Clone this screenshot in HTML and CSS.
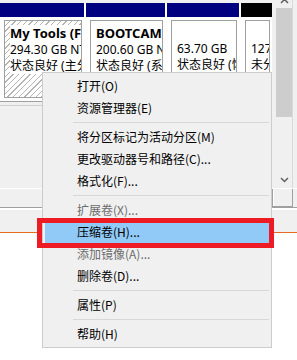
FILE: index.html
```html
<!DOCTYPE html>
<html lang="zh-CN">
<head>
<meta charset="utf-8">
<title>磁盘管理</title>
<link rel="stylesheet" href="styles.css">
</head>
<body>
<div class="screen">
  <div class="upper">
    <div class="disk">
      <div class="parts">
        <div class="part">
          <div class="part-head"></div>
          <div class="part-body">
            <div class="box sel">
              <div class="label"><b>My Tools (F:)</b><br>294.30 GB NTFS<br>状态良好 (主分区)</div>
            </div>
          </div>
        </div>
        <div class="part">
          <div class="part-head"></div>
          <div class="part-body">
            <div class="box">
              <div class="label"><b>BOOTCAMP (C:)</b><br>200.60 GB NTFS<br>状态良好 (系统)</div>
            </div>
          </div>
        </div>
        <div class="part">
          <div class="part-head"></div>
          <div class="part-body">
            <div class="box">
              <div class="label">&nbsp;<br>63.70 GB<br>状态良好 (恢复分区)</div>
            </div>
          </div>
        </div>
        <div class="part">
          <div class="part-head black"></div>
          <div class="part-body">
            <div class="box">
              <div class="label">&nbsp;<br>127 MB<br>未分配</div>
            </div>
          </div>
        </div>
      </div>
      <div class="rest"><div class="rest-line"></div></div>
    </div>
    <div class="vscroll">
      <svg class="arrow-up" width="9" height="6" viewBox="0 0 9 6"><path d="M1 5 L4.5 1.5 L8 5" fill="none" stroke="#606060" stroke-width="1.5"/></svg>
      <div class="thumb"></div>
      <div class="track"></div>
      <div class="down-btn">
        <svg width="9" height="6" viewBox="0 0 9 6"><path d="M1 1 L4.5 4.5 L8 1" fill="none" stroke="#606060" stroke-width="1.5"/></svg>
      </div>
    </div>
    <div class="edge"></div>
  </div>
  <div class="hscroll"><div class="corner"></div></div>
  <div class="legend"></div>
  <div class="orange"></div>
  <div class="bottom"></div>

  <div class="menu">
    <div class="item">打开(O)</div>
    <div class="item">资源管理器(E)</div>
    <div class="sep"></div>
    <div class="item">将分区标记为活动分区(M)</div>
    <div class="item">更改驱动器号和路径(C)...</div>
    <div class="item">格式化(F)...</div>
    <div class="sep"></div>
    <div class="item disabled">扩展卷(X)...</div>
    <div class="item hot">压缩卷(H)...</div>
    <div class="item disabled">添加镜像(A)...</div>
    <div class="item">删除卷(D)...</div>
    <div class="sep"></div>
    <div class="item">属性(P)</div>
    <div class="sep"></div>
    <div class="item">帮助(H)</div>
  </div>
  <div class="redbox"></div>
</div>
</body>
</html>
```

FILE: styles.css
```css
html, body {
  margin: 0;
  padding: 0;
}
body {
  width: 297px;
  height: 360px;
  overflow: hidden;
  font-family: "Noto Sans CJK SC", "Noto Sans", sans-serif;
  font-size: 12px;
  color: #000;
}
.screen {
  position: relative;
  width: 297px;
  height: 360px;
  background: #fff;
  overflow: hidden;
}
.upper {
  display: flex;
  height: 188px;
  background: #f0f0f0;
}
.disk {
  width: 272px;
  padding-top: 3px;
  display: flex;
  flex-direction: column;
}
.parts {
  display: grid;
  grid-template-columns: 84px 79px 72px 31px;
  column-gap: 2px;
  background: #fff;
  height: 98px;
}
.part {
  display: flex;
  flex-direction: column;
  min-width: 0;
}
.part-head {
  height: 14px;
  background: #000080;
}
.part-head.black {
  background: #000;
}
.part-body {
  flex: 1;
  padding: 3px 2px 3px 4px;
  background: #fff;
  min-height: 0;
}
.box {
  height: 100%;
  box-sizing: border-box;
  border: 1px solid #a0a0a0;
  padding: 4px 0 0 5px;
  overflow: hidden;
  background: #fff;
}
.box.sel {
  background: repeating-linear-gradient(135deg, #fff 0 3px, #b4b4b4 3px 4px);
}
.label {
  background: #fff;
  line-height: 16px;
  white-space: nowrap;
  font-family: "Noto Sans", "Noto Sans CJK SC", sans-serif;
  font-size: 12px;
}
.label b {
  font-family: "Noto Sans", sans-serif;
  font-weight: 700;
  font-size: 13px;
}
.rest {
  flex: 1;
  border-top: 1px solid #a0a0a0;
  background: #f0f0f0;
}
.rest-line {
  height: 3px;
  border-bottom: 1px solid #d0d0d0;
}
.vscroll {
  width: 16px;
  margin-left: 4px;
  display: flex;
  flex-direction: column;
  align-items: center;
  background: #f0f0f0;
}
.arrow-up {
  display: block;
  margin-top: -2px;
  height: 6px;
}
.thumb {
  width: 16px;
  height: 109px;
  margin-top: 4px;
  background: #cdcdcd;
}
.track {
  flex: 1;
}
.down-btn {
  height: 17px;
  width: 16px;
  display: flex;
  justify-content: center;
  padding-top: 6px;
  box-sizing: border-box;
}
.down-btn svg {
  display: block;
}
.edge {
  flex: 1;
  border-left: 1px solid #d9d9d9;
  background: #f0f0f0;
}
.hscroll {
  height: 19px;
  box-sizing: border-box;
  border-top: 1px solid #fff;
  background: #f0f0f0;
  display: flex;
  justify-content: flex-end;
  padding-right: 4px;
}
.corner {
  width: 21px;
  box-sizing: border-box;
  border: 1px solid #a0a0a0;
  border-top: 0;
  box-shadow: inset 1px 0 0 #fff;
}
.legend {
  height: 25px;
  box-sizing: border-box;
  border-top: 1px solid #a0a0a0;
  box-shadow: inset 0 2px 0 #fff;
  background: #f0f0f0;
}
.orange {
  height: 1px;
  background: #e46c1e;
}
.bottom {
  height: 127px;
  background: #fff;
}
.menu {
  position: absolute;
  left: 42px;
  top: 72px;
  width: 230px;
  height: 276px;
  box-sizing: border-box;
  border: 1px solid #cccccc;
  background: #f0f0f0;
  padding: 2px;
  display: flex;
  flex-direction: column;
}
.item {
  height: 22px;
  line-height: 22px;
  padding-left: 32px;
  white-space: nowrap;
  color: #000;
}
.item.disabled {
  color: #6d6d6d;
}
.item.hot {
  background: #91c9f7;
}
.sep {
  height: 1px;
  margin: 3px 0 3px 28px;
  background: #d7d7d7;
}
.redbox {
  position: absolute;
  left: 37px;
  top: 218px;
  width: 237px;
  height: 30px;
  box-sizing: border-box;
  border: 5px solid #ed1c24;
}
```
